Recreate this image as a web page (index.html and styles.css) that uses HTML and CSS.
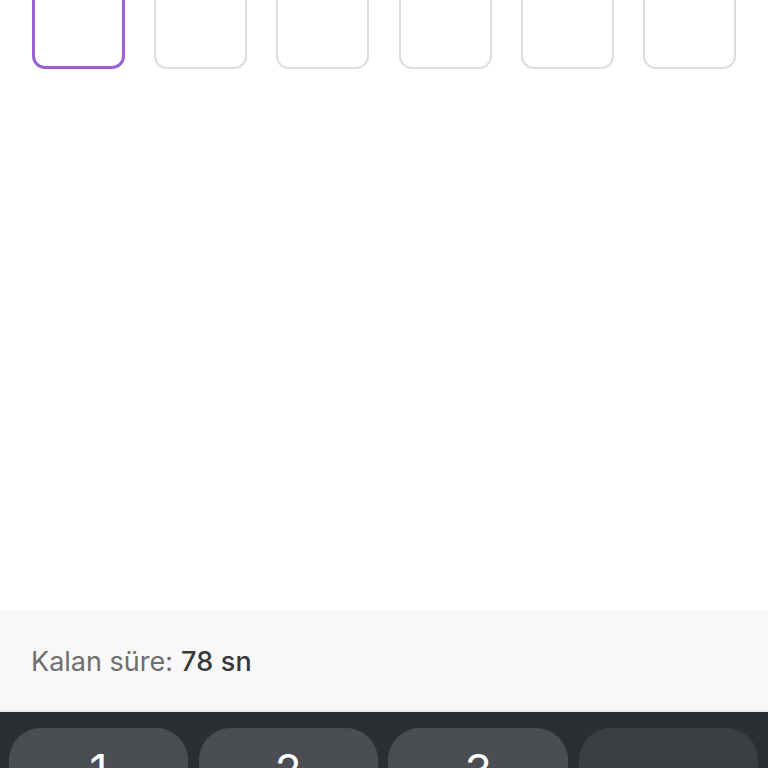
FILE: index.html
```html
<!DOCTYPE html>
<html lang="tr">
<head>
<meta charset="utf-8">
<title>Doğrulama kodu</title>
<link rel="stylesheet" href="styles.css">
</head>
<body>
<div class="page">
  <div class="otp-row">
    <div class="otp-box active"></div>
    <div class="otp-box"></div>
    <div class="otp-box"></div>
    <div class="otp-box"></div>
    <div class="otp-box"></div>
    <div class="otp-box"></div>
  </div>
  <div class="content"></div>
  <div class="timer">
    <span class="timer-label">Kalan süre:</span>
    <span class="timer-value">78 sn</span>
  </div>
  <div class="keyboard">
    <div class="key">1</div>
    <div class="key">2</div>
    <div class="key">3</div>
    <div class="key key-dark"></div>
  </div>
</div>
</body>
</html>
```

FILE: styles.css
```css
* { box-sizing: border-box; }
html, body {
  margin: 0;
  padding: 0;
  background: #ffffff;
  font-family: Inter, "Noto Sans", sans-serif;
}
.page {
  width: 768px;
  height: 768px;
  overflow: hidden;
  display: flex;
  flex-direction: column;
}
.otp-row {
  display: flex;
  justify-content: space-between;
  padding: 0 32px;
  margin-top: -26px;
  flex: none;
}
.otp-box {
  width: 93px;
  height: 95px;
  border: 2px solid #dcdcdc;
  border-radius: 13px;
  background: #fff;
}
.otp-box.active {
  border: 3px solid #9a62d3;
}
.content {
  height: 541px;
  flex: none;
}
.timer {
  flex: none;
  height: 102px;
  background: #f8f8f8;
  border-bottom: 2px solid #ebebeb;
  display: flex;
  align-items: center;
  padding: 3px 0 0 31px;
  font-size: 27px;
  gap: 8px;
}
.timer-label { color: #6e6e6e; }
.timer-value { color: #383838; font-weight: 500; letter-spacing: 0.2px; }
.keyboard {
  flex: none;
  height: 200px;
  background: #2b2f33;
  display: grid;
  grid-template-columns: 179px 179px 180px 179px;
  justify-content: space-between;
  padding: 16px 10px 0 9px;
  align-items: start;
}
.key {
  height: 110px;
  border-radius: 32px;
  background: #4a4d51;
  color: #ffffff;
  font-size: 44px;
  text-align: center;
  padding-top: 20px;
  line-height: 1;
}
.key-dark { background: #3b3f43; }
```
